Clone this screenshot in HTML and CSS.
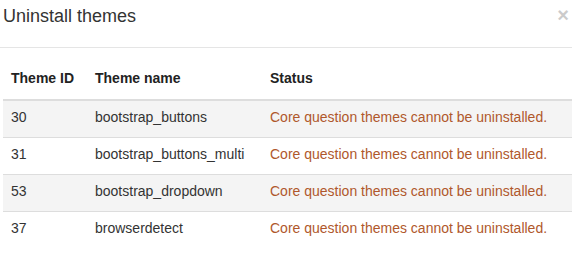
FILE: index.html
```html
<!DOCTYPE html>
<html>
  <head>
    <meta name="viewport" content="width=device-width, initial-scale=1" />
    <title>Uninstall themes</title>
    <link rel="stylesheet" href="styles.css">
  </head>

  <body>
    <div class="modal">
      <div class="modal-header">
        <h4 class="modal-title">Uninstall themes</h4>
        <button class="close" type="button">&times;</button>
      </div>

      <div class="modal-body">
        <table class="table">
          <thead>
            <tr>
              <th class="col-id">Theme ID</th>
              <th class="col-name">Theme name</th>
              <th>Status</th>
            </tr>
          </thead>
          <tbody>
            <tr>
              <td>30</td>
              <td>bootstrap_buttons</td>
              <td class="status">Core question themes cannot be uninstalled.</td>
            </tr>
            <tr>
              <td>31</td>
              <td>bootstrap_buttons_multi</td>
              <td class="status">Core question themes cannot be uninstalled.</td>
            </tr>
            <tr>
              <td>53</td>
              <td>bootstrap_dropdown</td>
              <td class="status">Core question themes cannot be uninstalled.</td>
            </tr>
            <tr>
              <td>37</td>
              <td>browserdetect</td>
              <td class="status">Core question themes cannot be uninstalled.</td>
            </tr>
          </tbody>
        </table>
      </div>
    </div>
  </body>
</html>
```

FILE: styles.css
```css
body {
  margin: 0;
  font-family: "Liberation Sans", Arial, Helvetica, sans-serif;
  font-size: 14px;
  line-height: 20px;
  color: #333;
  background-color: #fff;
}

.modal {
  width: 572px;
}

.modal-header {
  display: flex;
  justify-content: space-between;
  align-items: flex-start;
  padding: 3px 3px 18px 3px;
  border-bottom: 1px solid #e5e5e5;
}

.modal-title {
  margin: 0;
  font-size: 18px;
  font-weight: normal;
  line-height: 26px;
  color: #333;
}

.close {
  margin: 0;
  padding: 0;
  border: none;
  background: none;
  font-family: "Liberation Sans", Arial, sans-serif;
  font-size: 20px;
  font-weight: bold;
  line-height: 20px;
  color: #000;
  opacity: 0.2;
  cursor: pointer;
  margin-top: 2px;
  margin-right: 0;
}

.modal-body {
  padding: 15px 0 0 3px;
}

.table {
  width: 100%;
  border-collapse: collapse;
  border-spacing: 0;
}

.table th {
  text-align: left;
  font-weight: bold;
  color: #222;
  padding: 5px 8px 11px 8px;
  border-bottom: 2px solid #ddd;
}

.table td {
  padding: 6px 8px 10px 8px;
  border-top: 1px solid #ddd;
}

.table tbody tr:nth-child(odd) {
  background-color: #f4f4f4;
}

.col-id {
  width: 68px;
}

.col-name {
  width: 159px;
}

.status {
  color: #b0582c;
}
```
